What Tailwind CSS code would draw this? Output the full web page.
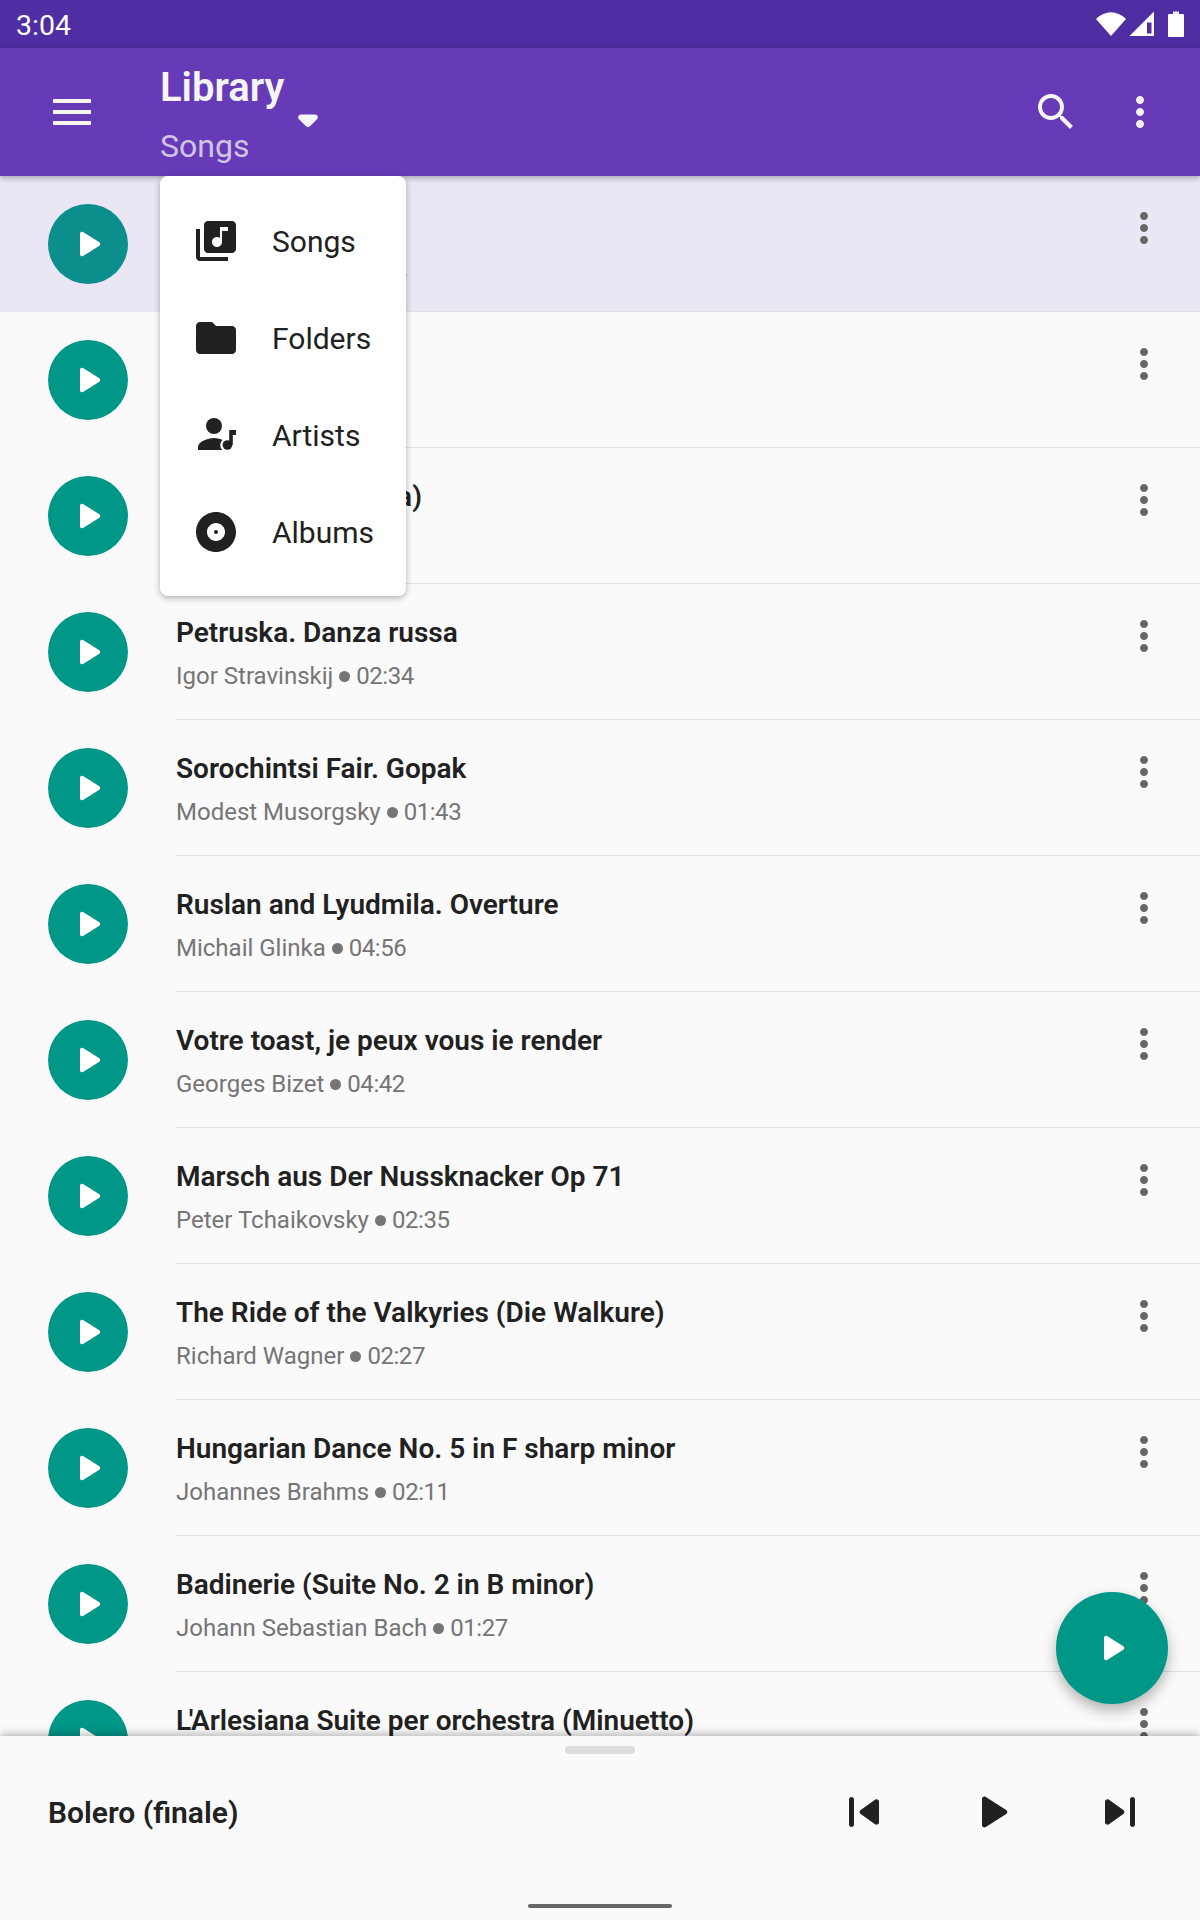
<!DOCTYPE html>
<html lang="en">
<head>
    <meta charset="UTF-8">
    <meta name="viewport" content="width=device-width, initial-scale=1.0">
    <title>Library</title>
    <script src="https://cdn.jsdelivr.net/npm/@tailwindcss/browser@4"></script>
</head>
<body class="antialiased">
    <div class="relative w-[1200px] h-[1920px] overflow-hidden flex flex-col bg-[#fafafa] font-['Roboto',sans-serif] text-[#212121]">

        <!-- status bar -->
        <div class="h-12 shrink-0 bg-[#4f2da2] flex items-center pl-4 pr-4 text-white">
            <span class="text-[28.5px] leading-none flex-1 pt-1">3:04</span>
            <svg class="w-[30px] h-[26px] mr-[3px]" viewBox="0 0 30 26"><path d="M15 25L0 8C9-1 21-1 30 8z" fill="#fff"/></svg>
            <svg class="w-[26px] h-[26px] mr-[13px]" viewBox="0 0 26 26"><path d="M0.5 25L25 0.5V25z" fill="#fff"/><path d="M18 11.5h4.5v11H18z" fill="#4f2da2"/></svg>
            <svg class="w-4 h-[26px]" viewBox="0 0 16 26"><path d="M1 3h4V0.5h6V3h4a1 1 0 0 1 1 1v21a1 1 0 0 1-1 1H1a1 1 0 0 1-1-1V4a1 1 0 0 1 1-1z" fill="#fff"/></svg>
        </div>

        <!-- app bar -->
        <div class="relative z-10 h-[128px] shrink-0 bg-[#673ab7] flex shadow-[0_2px_6px_rgba(0,0,0,0.3)] text-[#f5f5f5]">
            <div class="w-[160px] flex items-center pl-[53px]">
                <svg class="w-[38px] h-[26px]" viewBox="0 0 38 26"><path d="M0 0h38v4H0zM0 11h38v4H0zM0 22h38v4H0z" fill="#f5f5f5"/></svg>
            </div>
            <div class="flex flex-col">
                <span class="text-[40px] leading-[48px] font-semibold mt-4">Library</span>
                <span class="text-[32px] leading-9 mt-4 text-[#d1c4e9]">Songs</span>
            </div>
            <svg class="w-[66px] h-[66px] mt-[39px] ml-[-9px]" viewBox="0 0 24 24"><path d="M8.71 11.71l2.59 2.59c.39.39 1.02.39 1.41 0l2.59-2.59c.63-.63.18-1.71-.71-1.71H9.41c-.89 0-1.33 1.08-.7 1.71z" fill="#f5f5f5"/></svg>
            <div class="flex-1 flex items-center justify-end pr-9 gap-[36px]">
                <svg class="w-12 h-12" viewBox="0 0 24 24"><path d="M15.5 14h-.79l-.28-.27C15.41 12.59 16 11.11 16 9.5 16 5.91 13.09 3 9.5 3S3 5.91 3 9.5 5.91 16 9.5 16c1.61 0 3.09-.59 4.23-1.57l.27.28v.79l5 4.99L20.49 19l-4.99-5zm-6 0C7.01 14 5 11.99 5 9.5S7.01 5 9.5 5 14 7.01 14 9.5 11.99 14 9.5 14z" fill="#f5f5f5"/></svg>
                <svg class="w-12 h-12" viewBox="0 0 24 24"><path d="M12 8c1.1 0 2-.9 2-2s-.9-2-2-2-2 .9-2 2 .9 2 2 2zm0 2c-1.1 0-2 .9-2 2s.9 2 2 2 2-.9 2-2-.9-2-2-2zm0 6c-1.1 0-2 .9-2 2s.9 2 2 2 2-.9 2-2-.9-2-2-2z" fill="#f5f5f5"/></svg>
            </div>
        </div>

        <!-- song list, filled in below -->
        <div id="songList" class="flex-1 overflow-hidden"></div>

        <!-- now playing sheet -->
        <div class="relative z-10 h-[184px] shrink-0 bg-[#fafafa] shadow-[0_-2px_8px_rgba(0,0,0,0.28)]">
            <div class="absolute left-[565px] top-[10px] w-[70px] h-2 rounded-full bg-[#dddddd]"></div>
            <div class="h-full flex items-start pt-[46px] pl-12 pr-[50px]">
                <span class="flex-1 text-[30px] leading-[62px] font-semibold">Bolero (finale)</span>
                <svg class="w-[60px] h-[60px]" viewBox="0 0 24 24"><path d="M7 6c.55 0 1 .45 1 1v10c0 .55-.45 1-1 1s-1-.45-1-1V7c0-.55.45-1 1-1zm3.66 6.82l5.77 4.07c.66.47 1.58-.01 1.58-.82V7.93c0-.81-.91-1.28-1.58-.82l-5.77 4.07c-.57.4-.57 1.24 0 1.64z" fill="#212121"/></svg>
                <svg class="w-[60px] h-[60px] ml-[68px]" viewBox="0 0 24 24"><path d="M8 6.82v10.36c0 .79.87 1.27 1.54.84l8.14-5.18c.62-.39.62-1.29 0-1.69L9.54 5.98C8.87 5.55 8 6.03 8 6.82z" fill="#212121"/></svg>
                <svg class="w-[60px] h-[60px] ml-[68px]" viewBox="0 0 24 24"><path d="M7.58 16.89l5.77-4.07c.56-.4.56-1.24 0-1.63L7.58 7.11C6.91 6.65 6 7.12 6 7.93v8.14c0 .81.91 1.28 1.58.82zM16 7v10c0 .55.45 1 1 1s1-.45 1-1V7c0-.55-.45-1-1-1s-1 .45-1 1z" fill="#212121"/></svg>
            </div>
            <div class="absolute left-[528px] bottom-3 w-[144px] h-1 rounded-full bg-[#666666]"></div>
        </div>

        <!-- floating play button -->
        <div class="absolute z-20 left-[1056px] top-[1592px] w-[112px] h-[112px] rounded-full bg-[#009688] flex items-center justify-center shadow-[0_6px_14px_rgba(0,0,0,0.3)]">
            <svg class="w-12 h-12" viewBox="0 0 24 24"><path d="M8 6.82v10.36c0 .79.87 1.27 1.54.84l8.14-5.18c.62-.39.62-1.29 0-1.69L9.54 5.98C8.87 5.55 8 6.03 8 6.82z" fill="#fff"/></svg>
        </div>

        <!-- library dropdown -->
        <div class="absolute z-20 left-40 top-[176px] w-[246px] h-[420px] rounded-lg bg-white shadow-[0_2px_6px_rgba(0,0,0,0.3)] pt-4 pl-8 text-[30px]">
            <div class="h-[97px] flex items-center gap-8">
                <svg class="w-12 h-12" viewBox="0 0 24 24"><path d="M20 2H8c-1.1 0-2 .9-2 2v12c0 1.1.9 2 2 2h12c1.1 0 2-.9 2-2V4c0-1.1-.9-2-2-2zm-2 5h-3v5.5c0 1.38-1.12 2.5-2.5 2.5S10 13.88 10 12.5s1.12-2.5 2.5-2.5c.57 0 1.08.19 1.5.51V5h4v2zM4 6H2v14c0 1.1.9 2 2 2h14v-2H4V6z" fill="#212121"/></svg>
                <span class="pt-[2px]">Songs</span>
            </div>
            <div class="h-[97px] flex items-center gap-8">
                <svg class="w-12 h-12" viewBox="0 0 24 24"><path d="M10 4H4c-1.1 0-1.99.9-1.99 2L2 18c0 1.1.9 2 2 2h16c1.1 0 2-.9 2-2V8c0-1.1-.9-2-2-2h-8l-2-2z" fill="#212121"/></svg>
                <span class="pt-[2px]">Folders</span>
            </div>
            <div class="h-[97px] flex items-center gap-8">
                <svg class="w-12 h-12" viewBox="0 0 24 24"><circle cx="11" cy="7.5" r="4" fill="#212121"/><path d="M3 19.5V18c0-2.7 5-4.5 8-4.5 1.7 0 3.5.5 5 1.2V19.5z" fill="#212121"/><circle cx="17.7" cy="17" r="3.6" fill="#fff"/><circle cx="17.7" cy="17" r="2.4" fill="#212121"/><path d="M18.6 9.5H22v2.5h-1.6v5h-1.8z" fill="#212121"/></svg>
                <span class="pt-[2px]">Artists</span>
            </div>
            <div class="h-[97px] flex items-center gap-8">
                <svg class="w-12 h-12" viewBox="0 0 24 24"><path d="M12 2C6.48 2 2 6.48 2 12s4.48 10 10 10 10-4.48 10-10S17.52 2 12 2zm0 14.5c-2.49 0-4.5-2.01-4.5-4.5S9.51 7.5 12 7.5s4.5 2.01 4.5 4.5-2.01 4.5-4.5 4.5zm0-5.5c-.55 0-1 .45-1 1s.45 1 1 1 1-.45 1-1-.45-1-1-1z" fill="#212121"/></svg>
                <span class="pt-[2px]">Albums</span>
            </div>
        </div>
    </div>

    <script>
        const songs = [
            ['Bolero (finale)', 'Maurice Ravel', '03:42'],
            ['Carmen', 'Georges Bizet', '02:10'],
            ['Carmen (Habanera)', 'Georges Bizet', '02:16'],
            ['Petruska. Danza russa', 'Igor Stravinskij', '02:34'],
            ['Sorochintsi Fair. Gopak', 'Modest Musorgsky', '01:43'],
            ['Ruslan and Lyudmila. Overture', 'Michail Glinka', '04:56'],
            ['Votre toast, je peux vous ie render', 'Georges Bizet', '04:42'],
            ['Marsch aus Der Nussknacker Op 71', 'Peter Tchaikovsky', '02:35'],
            ['The Ride of the Valkyries (Die Walkure)', 'Richard Wagner', '02:27'],
            ['Hungarian Dance No. 5 in F sharp minor', 'Johannes Brahms', '02:11'],
            ['Badinerie (Suite No. 2 in B minor)', 'Johann Sebastian Bach', '01:27'],
            // the L' pair is kerned tight in the reference
            [`<span class="tracking-[-2.4px]">L'</span>Arlesiana Suite per orchestra (Minuetto)`, 'Georges Bizet', '03:05'],
        ];

        const songList = document.getElementById('songList');

        songs.forEach((song, i) => {
            const selected = i === 0;
            const row = document.createElement('div');
            row.className = 'h-[136px] flex ' + (selected ? 'bg-[#eae6f4]' : '');
            row.innerHTML = `
                <div class="w-[176px] shrink-0 pl-12 pt-7">
                    <div class="w-20 h-20 rounded-full flex items-center justify-center ${selected ? 'bg-[#0c8f8c]' : 'bg-[#009688]'}">
                        <svg class="w-12 h-12" viewBox="0 0 24 24"><path d="M8 6.82v10.36c0 .79.87 1.27 1.54.84l8.14-5.18c.62-.39.62-1.29 0-1.69L9.54 5.98C8.87 5.55 8 6.03 8 6.82z" fill="#fff"/></svg>
                    </div>
                </div>
                <div class="flex-1 flex border-b border-[#e0e0e0]">
                    <div class="flex-1 pt-[31px]">
                        <div class="text-[28px] leading-9 font-semibold">${song[0]}</div>
                        <div class="text-[24px] leading-8 mt-[9px] text-[#757575] flex items-center">
                            ${song[1]}<span class="w-[11px] h-[11px] rounded-full bg-[#757575] mx-[6px]"></span><span class="tracking-[-0.45px]">${song[2]}</span>
                        </div>
                    </div>
                    <svg class="w-12 h-12 mt-7 mr-8" viewBox="0 0 24 24"><path d="M12 8c1.1 0 2-.9 2-2s-.9-2-2-2-2 .9-2 2 .9 2 2 2zm0 2c-1.1 0-2 .9-2 2s.9 2 2 2 2-.9 2-2-.9-2-2-2zm0 6c-1.1 0-2 .9-2 2s.9 2 2 2 2-.9 2-2-.9-2-2-2z" fill="#666666"/></svg>
                </div>`;
            songList.appendChild(row);
        });
    </script>
</body>
</html>
